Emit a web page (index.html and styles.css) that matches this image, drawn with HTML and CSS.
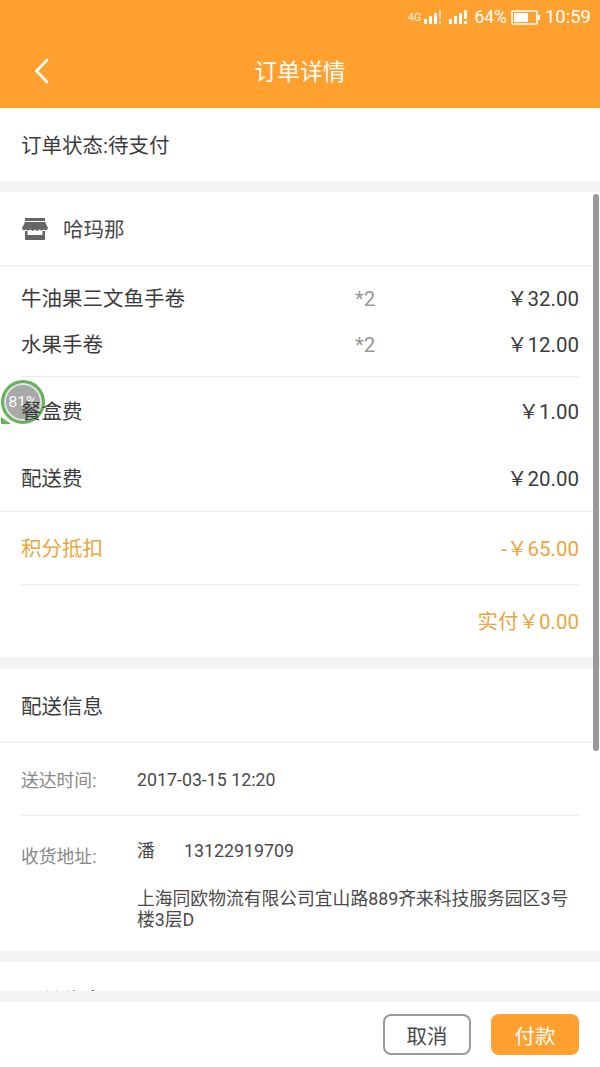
FILE: index.html
```html
<!DOCTYPE html>
<html lang="zh">
<head>
    <meta charset="UTF-8">
    <meta name="viewport" content="width=device-width, initial-scale=1.0">
    <title>订单详情</title>
    <link rel="stylesheet" href="styles.css">
</head>
<body>

<div class="page">
    <header class="header">
        <div class="status-bar">
            <span class="net">4G</span>
            <svg class="signal" width="18" height="16" viewBox="0 0 18 16"><path fill="#fff" d="M0 10h3v5H0zM5 7h3v8H5zM10 4h3v11h-3z"/><path fill="#fff" opacity=".6" d="M15 1h2v9h-2zM15 12h2v3h-2z"/></svg>
            <svg class="signal signal-main" width="19" height="16" viewBox="0 0 19 16"><path fill="#fff" d="M0 10h3v5H0zM5 7h3v8H5zM10 4h3v11h-3zM15 1h3v9h-3zM15 12h3v3h-3z"/></svg>
            <span class="percent">64%</span>
            <svg class="battery" width="29" height="15" viewBox="0 0 29 15"><rect x="1" y="1" width="25" height="13" fill="none" stroke="#fff" stroke-width="1.6" rx="1"/><rect x="3" y="3" width="14" height="9" fill="#fff"/><rect x="27" y="5" width="2" height="5" fill="#fff"/></svg>
            <span class="clock">10:59</span>
        </div>
        <div class="title-bar">
            <svg class="back" width="16" height="26" viewBox="0 0 16 26"><path d="M13 2 L2.500 13 L13 24" fill="none" stroke="#fff" stroke-width="2.600" stroke-linecap="round"/></svg>
            <h1 class="title">订单详情</h1>
        </div>
    </header>

    <main class="content">
        <section class="card status-row">订单状态:待支付</section>

        <section class="card card-order">
            <div class="shop-row">
                <svg class="shop-icon" width="26" height="24" viewBox="0 0 26 24">
                    <path fill="#666" d="M3 1h20v3H3zM3 5h20l3 6a2.500 2.500 0 0 1-4.300 1.500a3 3 0 0 1-4.300 0a3 3 0 0 1-4.400 0a3 3 0 0 1-4.400 0a3 3 0 0 1-4.300 0A2.500 2.500 0 0 1 0 11zM3 14h2.500v4h15v-4H23v9H3z"/>
                </svg>
                <span>哈玛那</span>
            </div>
            <div class="items">
                <div class="item">
                    <span class="item-name">牛油果三文鱼手卷</span>
                    <span class="item-qty">*2</span>
                    <span class="item-price">￥32.00</span>
                </div>
                <div class="item">
                    <span class="item-name">水果手卷</span>
                    <span class="item-qty">*2</span>
                    <span class="item-price">￥12.00</span>
                </div>
            </div>
            <div class="fees">
                <div class="fee"><span>餐盒费</span><span>￥1.00</span></div>
                <div class="fee"><span>配送费</span><span>￥20.00</span></div>
            </div>
            <div class="discount"><span>积分抵扣</span><span>-￥65.00</span></div>
            <div class="paid"><span>实付￥0.00</span></div>
        </section>

        <section class="card">
            <div class="card-title">配送信息</div>
            <div class="info-row info-time">
                <span class="info-label">送达时间:</span>
                <span class="info-value">2017-03-15 12:20</span>
            </div>
            <div class="info-row info-address">
                <span class="info-label">收货地址:</span>
                <div class="info-value">
                    <div class="contact"><span class="contact-name">潘</span><span>13122919709</span></div>
                    <div class="address">上海同欧物流有限公司宜山路889齐来科技服务园区3号楼3层D</div>
                </div>
            </div>
        </section>

        <section class="card card-clipped">
            <div class="card-title">订单信息</div>
        </section>
    </main>

    <footer class="footer">
        <button type="button" class="btn btn-cancel">取消</button>
        <button type="button" class="btn btn-pay">付款</button>
    </footer>

    <div class="scrollbar"></div>
    <div class="float-ball">81%</div>
</div>

</body>
</html>
```

FILE: styles.css
```css
* {
    box-sizing: border-box;
}

body {
    margin: 0;
    font-family: "Roboto", "Noto Sans CJK SC", sans-serif;
    color: #3c3c3c;
    background-color: #f4f4f4;
}

.page {
    position: relative;
    width: 600px;
    height: 1067px;
    overflow: hidden;
    display: flex;
    flex-direction: column;
}

.header {
    height: 108px;
    background-color: #ffa02f;
    color: #fff;
}

.status-bar {
    height: 34px;
    padding-right: 9px;
    display: flex;
    justify-content: flex-end;
    align-items: center;
}

.net {
    font-size: 11px;
    margin-right: 3px;
    opacity: 0.85;
}

.signal {
    margin-right: 7px;
}

.signal-main {
    margin-right: 6px;
}

.percent {
    font-size: 17.500px;
    margin-right: 4px;
}

.battery {
    margin-right: 5px;
}

.clock {
    font-size: 18.500px;
}

.title-bar {
    position: relative;
    height: 74px;
    padding-bottom: 2px;
    display: flex;
    justify-content: center;
    align-items: center;
}

.back {
    position: absolute;
    left: 34px;
    top: 24px;
}

.title {
    margin: 0;
    font-size: 22.800px;
    font-weight: 400;
}

.content {
    height: 883px;
    overflow: hidden;
}

.card {
    background-color: #fff;
    margin-bottom: 11px;
}

.card-order {
    margin-bottom: 12px;
}

.status-row {
    height: 73px;
    padding-left: 21px;
    padding-bottom: 2px;
    display: flex;
    align-items: center;
    font-size: 20.500px;
}

.shop-row {
    height: 74px;
    padding-left: 22px;
    padding-bottom: 2px;
    display: flex;
    align-items: center;
    font-size: 20.500px;
    color: #4a4a4a;
    border-bottom: 1px solid #ebebeb;
}

.shop-icon {
    margin-right: 15px;
    margin-top: 2px;
}

.items {
    margin: 0 21px;
    padding: 8px 0 10px;
    border-bottom: 1px solid #ebebeb;
}

.item {
    height: 46px;
    display: flex;
    align-items: center;
    font-size: 20.500px;
}

.item-name {
    width: 334px;
}

.item-qty {
    padding-top: 3px;
    color: #999;
}

.item-price {
    margin-left: auto;
}

/* keeps the row text readable under the floating ball */
.fees {
    position: relative;
    z-index: 1;
    padding: 0 21px;
    border-bottom: 1px solid #ebebeb;
}

.fee {
    height: 67px;
    padding-bottom: 2px;
    display: flex;
    justify-content: space-between;
    align-items: center;
    font-size: 20.500px;
}

.discount {
    height: 73px;
    margin: 0 21px;
    padding-bottom: 2px;
    display: flex;
    justify-content: space-between;
    align-items: center;
    font-size: 20.500px;
    color: #eca540;
    border-bottom: 1px solid #ebebeb;
}

.paid {
    height: 72px;
    padding-right: 21px;
    padding-bottom: 2px;
    display: flex;
    justify-content: flex-end;
    align-items: center;
    font-size: 20.500px;
    color: #eca540;
}

.card-title {
    height: 74px;
    padding-left: 21px;
    padding-bottom: 2px;
    display: flex;
    align-items: center;
    font-size: 20.500px;
    border-bottom: 1px solid #ebebeb;
}

.info-row {
    display: flex;
    margin: 0 21px;
    font-size: 17.800px;
}

.info-label {
    width: 116px;
    flex-shrink: 0;
    color: #888;
}

.info-value {
    color: #4a4a4a;
}

.info-time {
    height: 73px;
    align-items: center;
    border-bottom: 1px solid #ebebeb;
}

.info-address {
    height: 135px;
    padding-top: 20px;
}

.info-address .info-label {
    padding-top: 6px;
}

.contact-name {
    display: inline-block;
    width: 47px;
}

.address {
    margin-top: 26px;
    line-height: 21px;
}

.card-clipped {
    height: 29px;
    margin-bottom: 0;
    overflow: hidden;
}

.card-clipped .card-title {
    padding-bottom: 0;
    border-bottom: none;
}

.footer {
    margin-top: 11px;
    height: 65px;
    padding: 12px 21px 0 0;
    background-color: #fff;
    display: flex;
    justify-content: flex-end;
    align-items: flex-start;
}

.btn {
    height: 41px;
    font-family: inherit;
    font-size: 20.500px;
    border-radius: 8px;
    padding: 0;
}

.btn-cancel {
    width: 88px;
    margin-right: 20px;
    background-color: #fff;
    border: 2px solid #999;
    color: #4a4a4a;
}

.btn-pay {
    width: 88px;
    background-color: #ffa02f;
    border: none;
    color: #fff;
}

.scrollbar {
    position: absolute;
    z-index: 2;
    left: 593px;
    top: 194px;
    width: 6px;
    height: 557px;
    border-radius: 3px;
    background-color: #999;
}

.float-ball {
    position: absolute;
    left: 1px;
    top: 380px;
    width: 44px;
    height: 44px;
    border: 3px solid #66b35a;
    border-radius: 50%;
    background-color: #a8a8a8;
    box-shadow: inset 0 0 0 2px #e4e4e4;
    color: #fff;
    font-size: 15.500px;
    line-height: 38px;
    text-align: center;
}

.float-ball::after {
    content: "";
    position: absolute;
    left: -3px;
    bottom: -3px;
    width: 0;
    height: 0;
    border-left: 10px solid #66b35a;
    border-top: 7px solid transparent;
}
```
